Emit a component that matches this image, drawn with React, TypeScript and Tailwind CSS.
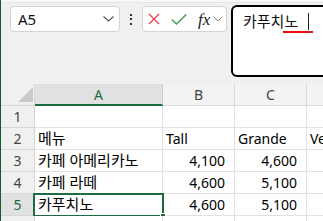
import React from "react";

const font = "font-['Noto_Sans','Noto_Sans_CJK_KR',sans-serif]";

type Cell = { t?: string; right?: boolean; ko?: boolean };

const rows: { n: number; cells: Cell[] }[] = [
  { n: 1, cells: [{}, {}, {}, {}] },
  { n: 2, cells: [{ t: "메뉴", ko: true }, { t: "Tall" }, { t: "Grande" }, { t: "Venti" }] },
  { n: 3, cells: [{ t: "카페 아메리카노", ko: true }, { t: "4,100", right: true }, { t: "4,600", right: true }, {}] },
  { n: 4, cells: [{ t: "카페 라떼", ko: true }, { t: "4,600", right: true }, { t: "5,100", right: true }, {}] },
  { n: 5, cells: [{ t: "카푸치노", ko: true }, { t: "4,600", right: true }, { t: "5,100", right: true }, {}] },
  { n: 6, cells: [{}, {}, {}, {}] },
];

const widths = ["w-[128px]", "w-[72px]", "w-[72px]", "w-[72px]"];

export default function App() {
  return (
    <div className={`w-[323px] h-[221px] overflow-hidden bg-[#f0f0f0] border-l border-[#155c33] relative ${font}`}>
      {/* top strip */}
      <div className="h-[3px] bg-[#f7f7f7] border-b border-[#e6e6e6]" />
      {/* formula bar row */}
      <div className="flex items-start h-[81px]">
        <div className="ml-[9px] mt-[3px] w-[110px] h-[26px] shrink-0 bg-white border border-[#d4d4d4] rounded-[4px] flex items-center pl-[7px] pr-[5px]">
          <span className="text-[15px] text-[#111] leading-none">A5</span>
          <svg className="ml-auto" width="11" height="6" viewBox="0 0 11 6">
            <path d="M0.5 0.5 L5.5 5 L10.5 0.5" fill="none" stroke="#555" strokeWidth="1.1" />
          </svg>
        </div>
        <div className="w-[22px] h-[32px] shrink-0 flex flex-col items-center justify-center gap-[2.5px]">
          <div className="w-[2px] h-[2px] bg-[#333]" />
          <div className="w-[2px] h-[2px] bg-[#333]" />
          <div className="w-[2px] h-[2px] bg-[#333]" />
        </div>
        <div className="mt-[3px] w-[85px] h-[26px] shrink-0 bg-white border border-[#d4d4d4] rounded-[4px] flex items-center pl-[5px]">
          <svg width="12" height="12" viewBox="0 0 12 12">
            <path d="M1 1 L11 11 M11 1 L1 11" stroke="#e8424a" strokeWidth="1.3" fill="none" />
          </svg>
          <svg className="ml-[11px]" width="16" height="11" viewBox="0 0 16 11">
            <path d="M0.8 5.5 L5.5 10 L15.2 0.6" stroke="#3d9b4f" strokeWidth="1.4" fill="none" />
          </svg>
          <span className="ml-[11px] font-['Liberation_Serif',serif] italic text-[17px] leading-none text-[#222]">fx</span>
          <svg className="ml-[3px]" width="10" height="6" viewBox="0 0 10 6">
            <path d="M0.5 0.5 L5 5 L9.5 0.5" fill="none" stroke="#888" strokeWidth="1" />
          </svg>
        </div>
        <div className="ml-[4px] mt-[2px] w-[110px] h-[72px] bg-white border-2 border-black rounded-l-[6px] relative shrink-0">
          <span className="absolute left-[10px] top-[3px] text-[15px] text-[#111]">카푸치노</span>
          <div className="absolute left-[75px] top-[6px] w-[1px] h-[17px] bg-[#222]" />
          <div className="absolute left-[50px] top-[24px] w-[30px] h-[2px] bg-[#e81010]" />
        </div>
      </div>

      {/* header row */}
      <div className="flex h-[22px]">
        <div className="w-[34px] shrink-0 h-full bg-[#f0f0f0] border-r border-b border-[#d6d6d6] relative">
          <svg className="absolute left-[17px] top-[3px]" width="15" height="15" viewBox="0 0 15 15">
            <path d="M15 0 L15 15 L0 15 Z" fill="#cacaca" />
          </svg>
        </div>
        <div className="w-[128px] shrink-0 h-full bg-[#e1e1e1] border-r border-[#d0d0d0] border-b-2 border-b-[#1e6b41] flex items-center justify-center text-[14px] text-[#1e6b41]">A</div>
        <div className="w-[72px] shrink-0 h-full bg-[#f3f3f3] border-r border-b border-[#dadada] flex items-center justify-center text-[14px] text-[#444]">B</div>
        <div className="w-[72px] shrink-0 h-full bg-[#f3f3f3] border-r border-b border-[#dadada] flex items-center justify-center text-[14px] text-[#444]">C</div>
        <div className="w-[72px] shrink-0 h-full bg-[#f3f3f3] border-r border-b border-[#dadada]" />
      </div>

      {rows.map((r) => (
        <div key={r.n} className="flex h-[22px] relative">
          <div
            className={`w-[34px] shrink-0 h-full border-r border-b border-[#d6d6d6] flex items-center justify-center text-[14px] ${
              r.n === 5 ? "bg-[#e1e1e1] text-[#1e6b41]" : "bg-[#f0f0f0] text-[#444]"
            }`}
          >
            {r.n < 6 ? r.n : ""}
          </div>
          {r.cells.map((c, i) => (
            <div
              key={i}
              className={`${widths[i]} shrink-0 h-full bg-white border-r border-b border-[#e1e1e1] flex items-center whitespace-nowrap overflow-visible text-black leading-none ${
                c.right ? "justify-end pr-[9px]" : "pl-[3px]"
              } ${c.ko ? "text-[15px]" : "text-[14px]"}`}
            >
              {c.t}
            </div>
          ))}
          {r.n === 5 && (
            <>
              <div className="absolute left-[32px] top-[-1px] w-[131px] h-[24px] border-2 border-[#1e6b41] pointer-events-none" />
              <div className="absolute left-[159px] top-[19px] w-[6px] h-[6px] bg-[#1e6b41] border border-white" />
            </>
          )}
        </div>
      ))}
    </div>
  );
}
